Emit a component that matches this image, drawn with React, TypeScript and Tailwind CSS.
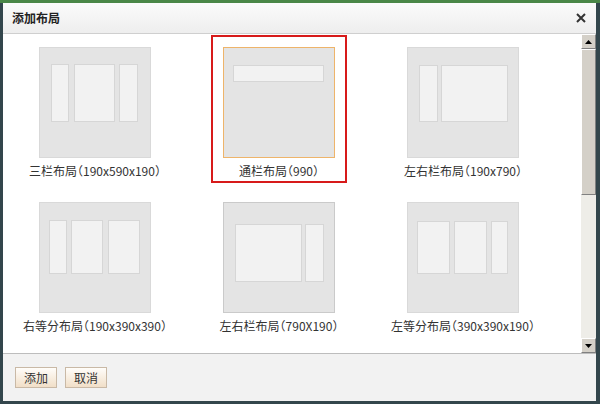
import React from 'react';

type Item = {
  label: string;
  top: number;
  h: number;
  cols: [number, number][];
  selected?: boolean;
  hover?: boolean;
};

const items: Item[] = [
  { label: '三栏布局（190x590x190）', top: 17, h: 58, cols: [[12, 18], [35, 41], [80, 19]] },
  { label: '通栏布局（990）', top: 18, h: 17, cols: [[10, 91]], selected: true },
  { label: '左右栏布局（190x790）', top: 18, h: 57, cols: [[12, 19], [34, 67]] },
  { label: '右等分布局（190x390x390）', top: 18, h: 54, cols: [[10, 18], [32, 32], [69, 32]] },
  { label: '左右栏布局（790X190）', top: 22, h: 58, cols: [[12, 67], [82, 19]], hover: true },
  { label: '左等分布局（390x390x190）', top: 19, h: 53, cols: [[10, 33], [47, 33], [84, 17]] },
];

function Thumb({ item }: { item: Item }) {
  const edge = item.selected ? '#eeb46a' : item.hover ? '#cacaca' : '#d9d9d9';
  return (
    <svg width="112" height="111" viewBox="0 0 112 111" className="block">
      <rect x="0.5" y="0.5" width="111" height="110" fill="#e4e4e4" stroke={edge} />
      {item.cols.map(([x, w], i) => (
        <rect
          key={i}
          x={x + 0.5}
          y={item.top + 0.5}
          width={w - 1}
          height={item.h - 1}
          fill="#f2f2f2"
          stroke="#d6d6d6"
        />
      ))}
    </svg>
  );
}

function Cell({ item }: { item: Item }) {
  return (
    <div className="flex justify-center">
      <div
        className={`flex flex-col items-center border-2 px-[10px] pt-[10px] pb-[3px] ${
          item.selected ? 'border-[#d71a1a]' : 'border-transparent'
        }`}
      >
        <Thumb item={item} />
        <div className="mt-[6px] h-[14px] leading-[14px] text-[12px] text-[#333] whitespace-nowrap [font-feature-settings:'halt']">
          {item.label}
        </div>
      </div>
    </div>
  );
}

function ScrollBtn({ up }: { up?: boolean }) {
  return (
    <div className="h-[15px] w-[15px] flex items-center justify-center bg-[#d4d0c8] border border-t-white border-l-white border-r-[#808080] border-b-[#808080]">
      <svg width="7" height="4" viewBox="0 0 7 4">
        {up ? <polygon points="3.5,0 7,4 0,4" fill="#000" /> : <polygon points="0,0 7,0 3.5,4" fill="#000" />}
      </svg>
    </div>
  );
}

export default function App() {
  return (
    <div
      className="w-[600px] h-[404px] bg-[#33464c] border-t-[3px] border-t-[#4a8748] pl-[3px] pr-[4px] pb-[3px] overflow-hidden"
      style={{ fontFamily: '"Noto Sans CJK SC", "Noto Sans", sans-serif' }}
    >
      <div className="w-[593px] h-[398px] flex flex-col bg-white">
        {/* title */}
        <div className="h-[31px] shrink-0 flex items-center justify-between pl-[9px] pr-[10px] bg-gradient-to-b from-[#fbfbfb] to-[#eeeeee] border-b border-[#cfcfcf]">
          <span className="text-[12px] font-bold text-[#222]">添加布局</span>
          <svg width="10" height="10" viewBox="0 0 10 10">
            <path d="M1 1 L9 9 M9 1 L1 9" stroke="#333" strokeWidth="2" />
          </svg>
        </div>

        {/* body */}
        <div className="h-[319px] shrink-0 flex">
          <div className="flex-1 overflow-hidden pt-[1px]">
            <div className="grid grid-cols-[184px_184px_184px] gap-y-[7px]">
              {items.map((it, i) => (
                <Cell key={i} item={it} />
              ))}
            </div>
          </div>
          <div className="w-[15px] flex flex-col bg-[#eeede8]">
            <ScrollBtn up />
            <div className="h-[146px] bg-[#d4d0c8] border border-t-white border-l-white border-r-[#808080] border-b-[#808080]" />
            <div className="flex-1" />
            <ScrollBtn />
          </div>
        </div>

        {/* footer */}
        <div className="flex-1 bg-[#f2f2f2] border-t border-[#bdbdbd] flex items-start gap-[8px] pl-[12px] pt-[13px]">
          {['添加', '取消'].map((t) => (
            <button
              key={t}
              className="w-[42px] h-[21px] text-[12px] text-[#333] border border-[#c9b9a6] bg-gradient-to-b from-[#fffdfa] to-[#f1dfc8] leading-none"
            >
              {t}
            </button>
          ))}
        </div>
      </div>
    </div>
  );
}
